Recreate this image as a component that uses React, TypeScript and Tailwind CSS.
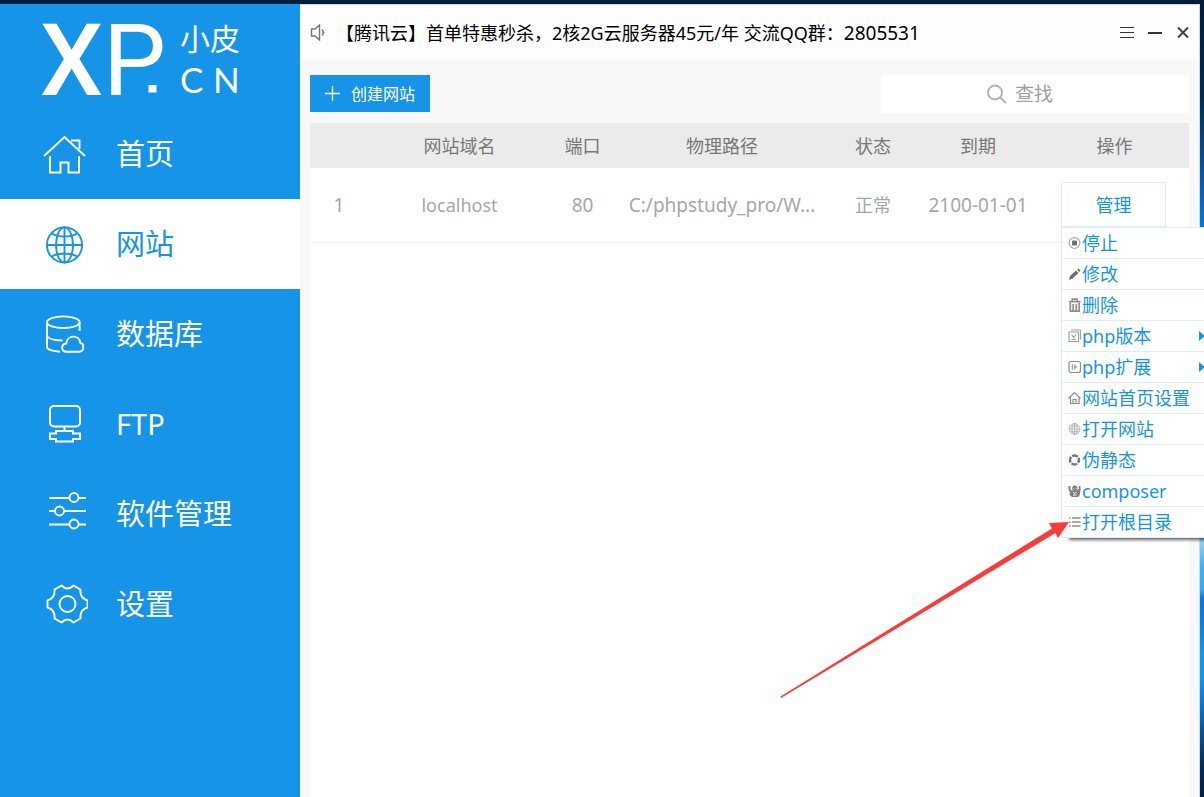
import React, { useState } from 'react';

const NAV_ITEMS = [
  { id: 'home', label: '首页' },
  { id: 'site', label: '网站' },
  { id: 'database', label: '数据库' },
  { id: 'ftp', label: 'FTP' },
  { id: 'software', label: '软件管理' },
  { id: 'settings', label: '设置' },
];

const MENU_ITEMS = [
  { id: 'stop', label: '停止' },
  { id: 'edit', label: '修改' },
  { id: 'delete', label: '删除' },
  { id: 'version', label: 'php版本', submenu: true },
  { id: 'extension', label: 'php扩展', submenu: true },
  { id: 'index', label: '网站首页设置' },
  { id: 'open', label: '打开网站' },
  { id: 'rewrite', label: '伪静态' },
  { id: 'composer', label: 'composer' },
  { id: 'root', label: '打开根目录' },
];

const SITES = [
  { id: 1, domain: 'localhost', port: 80, path: 'C:/phpstudy_pro/W...', status: '正常', expires: '2100-01-01' },
];

const NavIcon = ({ id }: { id: string }) => (
  <svg viewBox="0 0 48 48" className="size-12 shrink-0" fill="none" stroke="currentColor" strokeWidth="1.9" aria-hidden="true">
    {id === 'home' && (
      <path d="M4 26 24.500 7 45 26M31 10.500h8.500V19M10 26v16.500h10.500V32.500h8v10H39V26" />
    )}
    {id === 'site' && (
      <g>
        <circle cx="24.500" cy="25" r="17.600" />
        <ellipse cx="24.500" cy="25" rx="8.500" ry="17.600" />
        <path d="M24.500 7.400v35.200M7 25h35M12 13.500c6 4 19 4 25 0M12 36.500c6-4 19-4 25 0" />
      </g>
    )}
    {id === 'database' && (
      <g>
        <ellipse cx="23.300" cy="12.200" rx="16.300" ry="5.800" />
        <path d="M7 12.200V37c0 2.500 6 4.500 13 4.700M39.600 12.200V21M7 26c1 3 7 4.200 15.500 4.500" />
        <path d="M26.500 41.700c-5.500 0-6-7.400-.3-8.200 1-9 13-9 14-.8 4.300.8 4.300 9-1 9z" />
      </g>
    )}
    {id === 'ftp' && (
      <g strokeWidth="2">
        <rect x="10" y="6" width="30" height="20.500" rx="4" />
        <path d="M24.500 26.500V31M16 31h17v2.500h7V39h-7v2.500H16V39h-6v-5.500h6z" />
      </g>
    )}
    {id === 'software' && (
      <g>
        <path d="M9 8h20.500M38.500 8H46M9 21h6M24 21h22M9 34.500h20.500M38.500 34.500H46" />
        <circle cx="34" cy="7.500" r="4.500" />
        <circle cx="19.500" cy="21" r="4.500" />
        <circle cx="34" cy="34" r="4.500" />
      </g>
    )}
    {id === 'settings' && (
      <g transform="translate(27.500 24)">
        <circle r="8" />
        <path d="M-6-18.500Q0-12.500 6-18.500L13-14.500Q12-6 20-3.500V3.500Q12 6 13 14.500L6 18.500Q0 12.500-6 18.500L-13 14.500Q-12 6-20 3.500V-3.500Q-12-6-13-14.500Z" strokeLinejoin="round" />
      </g>
    )}
  </svg>
);

const MenuIcon = ({ id }: { id: string }) => (
  <svg viewBox="0 0 14 14" className="size-3.5 shrink-0 text-[#8f8f8f]" fill="none" stroke="currentColor" strokeWidth="1.2" aria-hidden="true">
    {id === 'stop' && (
      <g>
        <circle cx="6.500" cy="7" r="5.400" stroke="#aaa" />
        <rect x="4" y="4.500" width="5" height="5" rx="1" fill="#707070" stroke="none" />
      </g>
    )}
    {id === 'edit' && (
      <path d="M1 13l1-4 6-5.500 2.500 2.500-6 5.500zM9 2.800l1.500-1.300 2.200 2.200-1.400 1.400z" fill="#707070" stroke="none" />
    )}
    {id === 'delete' && (
      <g>
        <path d="M.8 3.600h11.700M4.300 3V1.200h4.800V3" strokeWidth="1.700" />
        <path d="M2.300 4.500v8.700h8.900V4.500M5.200 6v6.500M8.300 6v6.500" strokeWidth="1.700" />
      </g>
    )}
    {id === 'version' && (
      <path d="M1 3h9.500v9.500H1zM3 1h9.500v9.500M3.500 5.500l2.200 3 2.300-3M3.500 10.500h4.500" stroke="#a0a0a0" />
    )}
    {id === 'extension' && (
      <g>
        <rect x="1" y="1.500" width="11.500" height="11" rx="2" />
        <path d="M3.800 4.200v5.600h1.500V4.200zM6 4.200v5.600l3.500-2.800z" fill="#aaa" stroke="none" />
      </g>
    )}
    {id === 'index' && (
      <path d="M.5 7.500 6.500 1.500l6 6M2.500 6.500v6h8.500v-6M5 12V8.500h3V12" />
    )}
    {id === 'open' && (
      <g strokeWidth=".8" stroke="#aaa">
        <circle cx="6.500" cy="7" r="5.400" />
        <ellipse cx="6.500" cy="7" rx="2.600" ry="5.400" />
        <path d="M6.500 1.500v11M1 7h11M2 4.300h9M2 9.700h9" />
      </g>
    )}
    {id === 'rewrite' && (
      <circle cx="6.500" cy="7" r="4.500" strokeWidth="2.400" strokeDasharray="6 1.070" strokeDashoffset="3" stroke="#777" />
    )}
    {id === 'composer' && (
      <g fill="#808080" stroke="none">
        <path d="M.5 2h2v3.500L4.500 7 4 4 5.500 1.500h2.500L9.500 3.500 9 5.500l2-.5-.5-3h2v4.500l-1 5L10 13H4L1.500 11 2 8 .5 6z" />
        <path d="M5 5h1M7.500 5h1M5 8l1.500 1.500L9 8M5 11h3.500" stroke="#fff" strokeWidth=".9" />
      </g>
    )}
    {id === 'root' && (
      <path d="M1 3h1.500M4 3h8.500M1 7h1.500M4 7h8.500M1 11h1.500M4 11h8.500" strokeWidth="1.400" />
    )}
  </svg>
);

const Logo = () => (
  <svg viewBox="0 0 300 105" className="w-full overflow-visible" fill="#fff" role="img" aria-label="XP.CN 小皮">
    <g fontFamily="Roboto, sans-serif" fontSize="100">
      <text x="40" y="91" fontWeight="500">X</text>
      <text x="103" y="91">P</text>
    </g>
    <rect x="148.500" y="81" width="8" height="7.500" />
    <text x="180" y="46" fontFamily="'Noto Sans CJK SC', sans-serif" fontSize="30">小皮</text>
    <g fontFamily="Lato, sans-serif" fontSize="35">
      <text x="180" y="89">C</text>
      <text x="213" y="89">N</text>
    </g>
  </svg>
);

const SiteMenu = () => (
  <div className="absolute top-full left-0 w-[148px]">
    <ul className="border-t border-l border-[#dceefb] bg-white shadow-[7px_3px_3px_-1px_rgba(0,0,0,0.6)]">
      {MENU_ITEMS.map(item => (
        <li key={item.id} className="border-b border-[#dceefb]">
          <button type="button" className="flex h-[30px] w-full items-center pl-1.5 text-left leading-[30px] whitespace-nowrap">
            <MenuIcon id={item.id} />
            {item.label}
            {item.submenu && (
              <svg viewBox="0 0 10 10" className="ml-auto size-2.5" fill="currentColor" aria-hidden="true">
                <path d="M0 0v10l6-5z" />
              </svg>
            )}
          </button>
        </li>
      ))}
    </ul>
    {/* pointer to the last menu entry */}
    <svg viewBox="0 0 290 180" className="pointer-events-none absolute top-[293px] right-[139px] h-[180px] w-[290px]" aria-hidden="true">
      <path d="M.5 176.500 272 8.500l-3-5.500 20-1-11 16-2.500-5L1 178z" fill="#fc3a38" />
    </svg>
  </div>
);

export default function App() {
  const [active, setActive] = useState('site');

  return (
    <div className="flex min-h-screen overflow-hidden bg-[linear-gradient(#001c3b_0%,#002a57_12%,#0075e0_28%,#38b0f8_60%,#85d2fb_68%,#35b4fa_71%,#28b0f8_74%,#0078e8_75%,#0080ee_78%,#009cff_82%,#009cff_85%,#0068c0_90%,#002c60_96%,#002048_100%)] pt-1 pr-1 font-['Noto_Sans','Noto_Sans_CJK_SC',sans-serif] text-lg">
      <aside className="w-[300px] shrink-0 bg-[#1694e8] text-white">
        <Logo />
        <nav>
          {NAV_ITEMS.map(item => (
            <button
              key={item.id}
              type="button"
              onClick={() => setActive(item.id)}
              className={`flex h-[90px] w-full items-center gap-7 pl-10 text-left text-[29px] leading-9 ${
                active === item.id ? 'bg-white text-[#1694e8]' : 'text-white'
              }`}
            >
              <NavIcon id={item.id} />
              {item.label}
            </button>
          ))}
        </nav>
      </aside>

      <main className="flex min-w-0 flex-1 flex-col border-t border-r border-[#d8d8d8] bg-[#f8f8f8]">
        <header className="flex h-[55px] items-center bg-[#fdfdfd] pr-2 pl-2.5">
          <svg viewBox="0 0 18 18" className="size-[18px]" fill="none" stroke="#777" strokeWidth="1.400" aria-hidden="true">
            <path d="M1.500 5H5L9.500 1v15L5 12H1.500zM12 5.500q2.500 3 0 6M13.500 8.500h1" />
          </svg>
          <p className="flex-1 pl-2 leading-7 text-black">
            【腾讯云】首单特惠秒杀，2核2G云服务器45元/年 交流QQ群：<span className="text-[19px]">2805531</span>
          </p>
          <div className="flex items-center gap-3">
            <button type="button" aria-label="菜单">
              <svg viewBox="0 0 16 16" className="size-4" stroke="#333" aria-hidden="true">
                <path d="M1 2.500h14M1 7.500h14M1 12.500h14" />
              </svg>
            </button>
            <button type="button" aria-label="最小化">
              <svg viewBox="0 0 16 16" className="size-4" stroke="#333" strokeWidth="2" aria-hidden="true">
                <path d="M1 8h14" />
              </svg>
            </button>
            <button type="button" aria-label="关闭">
              <svg viewBox="0 0 16 16" className="size-4" stroke="#444" strokeWidth="2" aria-hidden="true">
                <path d="M3 2.500l10 10M13 2.500L3 12.500" />
              </svg>
            </button>
          </div>
        </header>

        <div className="flex items-start justify-between px-2.5 pt-[15px] pb-2.5">
          <button type="button" className="flex h-[37px] w-[120px] items-center gap-2.5 bg-[#1694e8] pl-3.5 text-base leading-6 text-white">
            <svg viewBox="0 0 17 17" className="size-[17px]" stroke="currentColor" strokeWidth="1.300" aria-hidden="true">
              <path d="M1 8.500h15M8.500 1v15" />
            </svg>
            创建网站
          </button>
          <label className="flex h-[38px] w-[308px] items-center justify-center gap-2 bg-white pr-7">
            <svg viewBox="0 0 20 20" className="size-5" fill="none" stroke="#b0b0b0" strokeWidth="1.800" aria-hidden="true">
              <circle cx="8" cy="8.500" r="7" />
              <path d="M13 13.500l6 5.500" />
            </svg>
            <input type="text" aria-label="查找" placeholder="查找" className="w-10 text-[19px] leading-7 text-gray-600 outline-none placeholder:text-[#a0a0a0]" />
          </label>
        </div>

        <div className="mx-2.5 flex-1 bg-white">
          <table className="w-full table-fixed border-collapse text-center leading-7">
            <colgroup>
              <col className="w-[58px]" />
              <col className="w-[183px]" />
              <col className="w-[63px]" />
              <col />
              <col className="w-[86px]" />
              <col className="w-[124px]" />
              <col className="w-[149px]" />
            </colgroup>
            <thead className="bg-[#ebebeb] text-[#777777]">
              <tr className="h-[45px]">
                <th aria-label="序号" />
                <th className="font-normal">网站域名</th>
                <th className="font-normal">端口</th>
                <th className="font-normal">物理路径</th>
                <th className="font-normal">状态</th>
                <th className="font-normal">到期</th>
                <th className="font-normal">操作</th>
              </tr>
            </thead>
            <tbody className="text-[#a3a8ae]">
              {SITES.map(site => (
                <tr key={site.id} className="h-[74px] border-b border-[#eeeeee]">
                  <td className="text-[19px]">{site.id}</td>
                  <td>{site.domain}</td>
                  <td className="text-[19px]">{site.port}</td>
                  <td className="text-[19px] whitespace-nowrap">{site.path}</td>
                  <td>{site.status}</td>
                  <td className="text-[19px] whitespace-nowrap">{site.expires}</td>
                  <td className="pr-0.5 text-[#1694e8]">
                    <div className="relative mx-auto w-[105px]">
                      <button type="button" className="block h-[45px] w-full border border-[#dceefb] bg-white">
                        管理
                      </button>
                      <SiteMenu />
                    </div>
                  </td>
                </tr>
              ))}
            </tbody>
          </table>
        </div>
      </main>
    </div>
  );
}
